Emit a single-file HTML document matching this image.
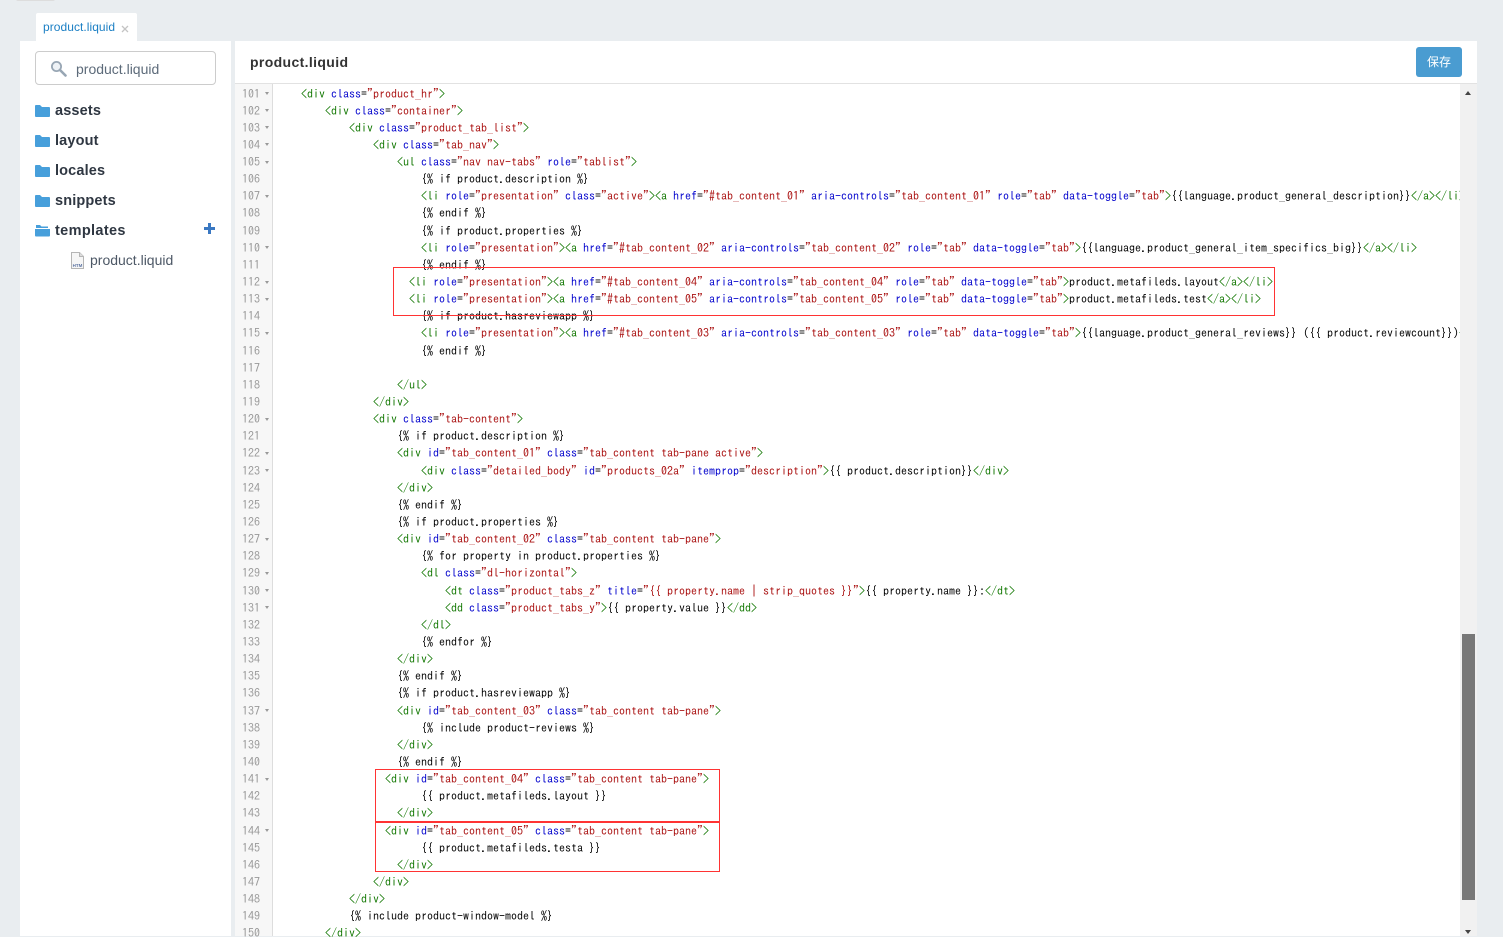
<!DOCTYPE html>
<html><head><meta charset="utf-8"><title>product.liquid</title>
<style>
html,body{margin:0;padding:0;width:1503px;height:936px;overflow:hidden;background:#e9edf0;font-family:"Liberation Sans","Noto Sans CJK SC",sans-serif}
.a{position:absolute}
#code,#nums{font-family:"IPAGothic","Liberation Mono",monospace;font-size:12px;line-height:17.146px;white-space:pre}
#code{left:277px;top:85.5px;width:1183px;height:851px;overflow:hidden;color:#000}
#nums{left:235px;top:85.5px;width:25px;text-align:right;color:#999;height:851px;overflow:hidden}
g{color:#117700}b{color:#0000cc;font-weight:normal}r{color:#aa1111}
.f{position:absolute;left:265px;width:0;height:0;border-left:2.5px solid transparent;border-right:2.5px solid transparent;border-top:3px solid #999}
.box{position:absolute;border:1px solid #ff3333;box-sizing:border-box}
.it{position:absolute;left:55px;font-size:14.5px;letter-spacing:.15px;font-weight:bold;color:#2f3742;line-height:20px}
</style></head><body>
<div class="a" style="left:16px;top:-3px;width:39px;height:4px;background:#fff;border:1px solid #ddd;border-radius:2px;box-sizing:border-box"></div>
<div class="a" style="left:36px;top:13px;width:101px;height:28px;background:#fff;border-radius:2px 2px 0 0"></div>
<div class="a" style="left:43px;top:20px;font-size:12px;letter-spacing:.05px;line-height:15px;color:#1b7fc4">product.liquid</div>
<svg class="a" style="left:121px;top:25px" width="8" height="8" viewBox="0 0 8 8"><path d="M1 1L7 7M7 1L1 7" stroke="#c4c4c4" stroke-width="1.3"/></svg>

<div class="a" style="left:20px;top:41px;width:211px;height:895px;background:#fff"></div>
<div class="a" style="left:35px;top:51px;width:181px;height:34px;box-sizing:border-box;border:1px solid #ccc;border-radius:4px;background:#fff"></div>
<svg class="a" style="left:50px;top:60px" width="18" height="17" viewBox="0 0 18 17"><circle cx="6.5" cy="6.5" r="4.6" fill="#eef2f6" stroke="#98a6b4" stroke-width="1.8"/><path d="M10 10L15.5 15.5" stroke="#98a6b4" stroke-width="2.6" stroke-linecap="round"/></svg>
<div class="a" style="left:76px;top:59px;font-size:14px;line-height:20px;color:#5d6b7a">product.liquid</div>

<svg class="a" style="left:35px;top:104px" width="15" height="13" viewBox="0 0 15 13"><path d="M0 2a1 1 0 0 1 1-1h4l2 2h7a1 1 0 0 1 1 1v8a1 1 0 0 1-1 1H1a1 1 0 0 1-1-1z" fill="#479fdb"/></svg>
<div class="it" style="top:101px">assets</div>
<svg class="a" style="left:35px;top:134px" width="15" height="13" viewBox="0 0 15 13"><path d="M0 2a1 1 0 0 1 1-1h4l2 2h7a1 1 0 0 1 1 1v8a1 1 0 0 1-1 1H1a1 1 0 0 1-1-1z" fill="#479fdb"/></svg>
<div class="it" style="top:131px">layout</div>
<svg class="a" style="left:35px;top:164px" width="15" height="13" viewBox="0 0 15 13"><path d="M0 2a1 1 0 0 1 1-1h4l2 2h7a1 1 0 0 1 1 1v8a1 1 0 0 1-1 1H1a1 1 0 0 1-1-1z" fill="#479fdb"/></svg>
<div class="it" style="top:161px">locales</div>
<svg class="a" style="left:35px;top:194px" width="15" height="13" viewBox="0 0 15 13"><path d="M0 2a1 1 0 0 1 1-1h4l2 2h7a1 1 0 0 1 1 1v8a1 1 0 0 1-1 1H1a1 1 0 0 1-1-1z" fill="#479fdb"/></svg>
<div class="it" style="top:191px">snippets</div>
<svg class="a" style="left:35px;top:224px" width="15" height="13" viewBox="0 0 15 13"><path d="M1 1h4l1.500 1.500H13V4H1z" fill="#479fdb"/><path d="M0 5h15v6.500a1 1 0 0 1-1 1H1a1 1 0 0 1-1-1z" fill="#479fdb"/></svg>
<div class="it" style="top:221px;letter-spacing:.35px">templates</div>
<svg class="a" style="left:204px;top:223px" width="11" height="11" viewBox="0 0 11 11"><path d="M5.500 0V11M0 5.500H11" stroke="#3a78c2" stroke-width="3"/></svg>
<svg class="a" style="left:71px;top:252px" width="13" height="17" viewBox="0 0 13 17"><path d="M.5.500H8.500L12.500 4.500V16.500H.5z" fill="#f6f6f6" stroke="#b5b5b5"/><path d="M8.500.500V4.500H12.500" fill="#ddd" stroke="#b5b5b5"/><text x="6.500" y="15" font-size="4.500" font-weight="bold" text-anchor="middle" fill="#5f76a3" font-family="Liberation Sans, sans-serif">HTM</text></svg>
<div class="a" style="left:90px;top:250px;font-size:14px;line-height:20px;color:#4d5866">product.liquid</div>

<div class="a" style="left:235px;top:41px;width:1242px;height:895px;background:#fff"></div>
<div class="a" style="left:235px;top:83px;width:1242px;height:1px;background:#e2e2e2"></div>
<div class="a" style="left:250px;top:52px;font-size:14px;letter-spacing:.36px;font-weight:bold;line-height:20px;color:#333">product.liquid</div>
<div class="a" style="left:1416px;top:47px;width:46px;height:30px;background:#4a9cd1;border-radius:3px;color:#fff;font-size:12px;line-height:30px;text-align:center">保存</div>

<div class="a" style="left:235px;top:84px;width:37px;height:852px;background:#f7f7f7"></div>
<div class="a" style="left:272px;top:84px;width:1px;height:852px;background:#ddd"></div>
<div class="a" style="left:1460px;top:84px;width:17px;height:852px;background:#f1f1f1"></div>
<div class="a" style="left:1462px;top:634px;width:13px;height:266px;background:#787878"></div>
<div class="a" style="left:1465px;top:91px;width:0;height:0;border-left:3.5px solid transparent;border-right:3.5px solid transparent;border-bottom:4px solid #444"></div>
<div class="a" style="left:1465px;top:930px;width:0;height:0;border-left:3.5px solid transparent;border-right:3.5px solid transparent;border-top:4px solid #444"></div>

<div id="nums" class="a">101
102
103
104
105
106
107
108
109
110
111
112
113
114
115
116
117
118
119
120
121
122
123
124
125
126
127
128
129
130
131
132
133
134
135
136
137
138
139
140
141
142
143
144
145
146
147
148
149
150</div>
<i class="f" style="top:92px"></i><i class="f" style="top:109px"></i><i class="f" style="top:126px"></i><i class="f" style="top:143px"></i><i class="f" style="top:161px"></i><i class="f" style="top:195px"></i><i class="f" style="top:246px"></i><i class="f" style="top:281px"></i><i class="f" style="top:298px"></i><i class="f" style="top:332px"></i><i class="f" style="top:418px"></i><i class="f" style="top:452px"></i><i class="f" style="top:469px"></i><i class="f" style="top:538px"></i><i class="f" style="top:572px"></i><i class="f" style="top:589px"></i><i class="f" style="top:606px"></i><i class="f" style="top:709px"></i><i class="f" style="top:778px"></i><i class="f" style="top:829px"></i>

<div id="code" class="a">    <g>&lt;div</g> <b>class</b>=<r>"product_hr"</r><g>&gt;</g>
        <g>&lt;div</g> <b>class</b>=<r>"container"</r><g>&gt;</g>
            <g>&lt;div</g> <b>class</b>=<r>"product_tab_list"</r><g>&gt;</g>
                <g>&lt;div</g> <b>class</b>=<r>"tab_nav"</r><g>&gt;</g>
                    <g>&lt;ul</g> <b>class</b>=<r>"nav nav-tabs"</r> <b>role</b>=<r>"tablist"</r><g>&gt;</g>
                        {% if product.description %}
                        <g>&lt;li</g> <b>role</b>=<r>"presentation"</r> <b>class</b>=<r>"active"</r><g>&gt;&lt;a</g> <b>href</b>=<r>"#tab_content_01"</r> <b>aria-controls</b>=<r>"tab_content_01"</r> <b>role</b>=<r>"tab"</r> <b>data-toggle</b>=<r>"tab"</r><g>&gt;</g>{{language.product_general_description}}<g>&lt;/a&gt;&lt;/li&gt;</g>
                        {% endif %}
                        {% if product.properties %}
                        <g>&lt;li</g> <b>role</b>=<r>"presentation"</r><g>&gt;&lt;a</g> <b>href</b>=<r>"#tab_content_02"</r> <b>aria-controls</b>=<r>"tab_content_02"</r> <b>role</b>=<r>"tab"</r> <b>data-toggle</b>=<r>"tab"</r><g>&gt;</g>{{language.product_general_item_specifics_big}}<g>&lt;/a&gt;&lt;/li&gt;</g>
                        {% endif %}
                      <g>&lt;li</g> <b>role</b>=<r>"presentation"</r><g>&gt;&lt;a</g> <b>href</b>=<r>"#tab_content_04"</r> <b>aria-controls</b>=<r>"tab_content_04"</r> <b>role</b>=<r>"tab"</r> <b>data-toggle</b>=<r>"tab"</r><g>&gt;</g>product.metafileds.layout<g>&lt;/a&gt;&lt;/li&gt;</g>
                      <g>&lt;li</g> <b>role</b>=<r>"presentation"</r><g>&gt;&lt;a</g> <b>href</b>=<r>"#tab_content_05"</r> <b>aria-controls</b>=<r>"tab_content_05"</r> <b>role</b>=<r>"tab"</r> <b>data-toggle</b>=<r>"tab"</r><g>&gt;</g>product.metafileds.test<g>&lt;/a&gt;&lt;/li&gt;</g>
                        {% if product.hasreviewapp %}
                        <g>&lt;li</g> <b>role</b>=<r>"presentation"</r><g>&gt;&lt;a</g> <b>href</b>=<r>"#tab_content_03"</r> <b>aria-controls</b>=<r>"tab_content_03"</r> <b>role</b>=<r>"tab"</r> <b>data-toggle</b>=<r>"tab"</r><g>&gt;</g>{{language.product_general_reviews}} ({{ product.reviewcount}})<g>&lt;/a&gt;&lt;/li&gt;</g>
                        {% endif %}

                    <g>&lt;/ul&gt;</g>
                <g>&lt;/div&gt;</g>
                <g>&lt;div</g> <b>class</b>=<r>"tab-content"</r><g>&gt;</g>
                    {% if product.description %}
                    <g>&lt;div</g> <b>id</b>=<r>"tab_content_01"</r> <b>class</b>=<r>"tab_content tab-pane active"</r><g>&gt;</g>
                        <g>&lt;div</g> <b>class</b>=<r>"detailed_body"</r> <b>id</b>=<r>"products_02a"</r> <b>itemprop</b>=<r>"description"</r><g>&gt;</g>{{ product.description}}<g>&lt;/div&gt;</g>
                    <g>&lt;/div&gt;</g>
                    {% endif %}
                    {% if product.properties %}
                    <g>&lt;div</g> <b>id</b>=<r>"tab_content_02"</r> <b>class</b>=<r>"tab_content tab-pane"</r><g>&gt;</g>
                        {% for property in product.properties %}
                        <g>&lt;dl</g> <b>class</b>=<r>"dl-horizontal"</r><g>&gt;</g>
                            <g>&lt;dt</g> <b>class</b>=<r>"product_tabs_z"</r> <b>title</b>=<r>"{{ property.name | strip_quotes }}"</r><g>&gt;</g>{{ property.name }}:<g>&lt;/dt&gt;</g>
                            <g>&lt;dd</g> <b>class</b>=<r>"product_tabs_y"</r><g>&gt;</g>{{ property.value }}<g>&lt;/dd&gt;</g>
                        <g>&lt;/dl&gt;</g>
                        {% endfor %}
                    <g>&lt;/div&gt;</g>
                    {% endif %}
                    {% if product.hasreviewapp %}
                    <g>&lt;div</g> <b>id</b>=<r>"tab_content_03"</r> <b>class</b>=<r>"tab_content tab-pane"</r><g>&gt;</g>
                        {% include product-reviews %}
                    <g>&lt;/div&gt;</g>
                    {% endif %}
                  <g>&lt;div</g> <b>id</b>=<r>"tab_content_04"</r> <b>class</b>=<r>"tab_content tab-pane"</r><g>&gt;</g>
                        {{ product.metafileds.layout }}
                    <g>&lt;/div&gt;</g>
                  <g>&lt;div</g> <b>id</b>=<r>"tab_content_05"</r> <b>class</b>=<r>"tab_content tab-pane"</r><g>&gt;</g>
                        {{ product.metafileds.testa }}
                    <g>&lt;/div&gt;</g>
                <g>&lt;/div&gt;</g>
            <g>&lt;/div&gt;</g>
            {% include product-window-model %}
        <g>&lt;/div&gt;</g></div>

<div class="box" style="left:393px;top:267px;width:882px;height:49px"></div>
<div class="box" style="left:375px;top:769px;width:345px;height:54px;border-bottom-width:2px"></div>
<div class="box" style="left:375px;top:822px;width:345px;height:50px;border-top:0"></div>
</body></html>
